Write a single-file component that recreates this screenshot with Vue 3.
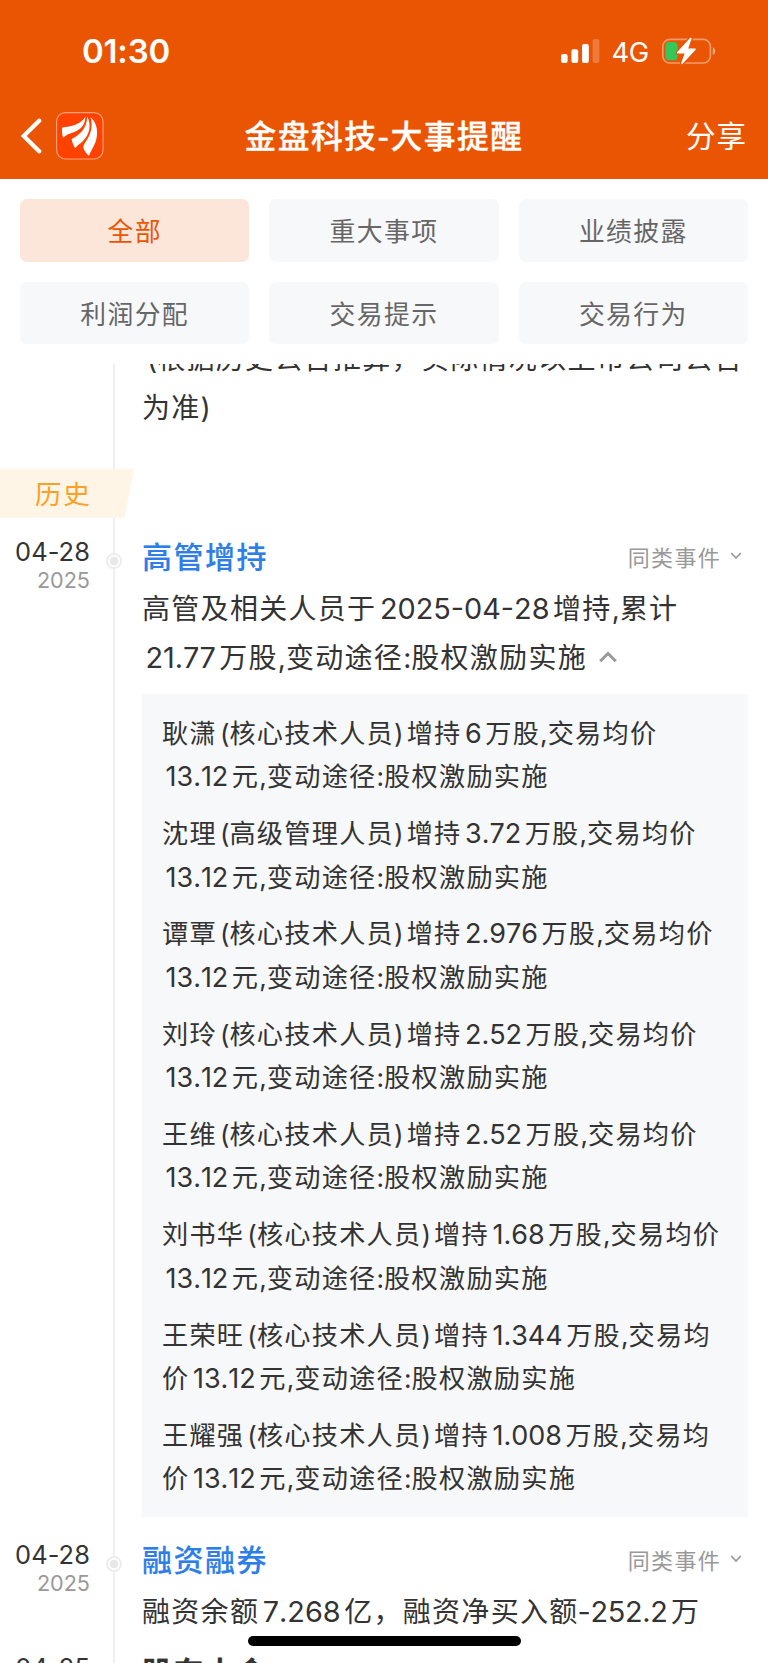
<script setup>
import { ref } from 'vue'

const activeFilter = ref('全部')
const filters = ['全部', '重大事项', '业绩披露', '利润分配', '交易提示', '交易行为']

const noticeLines = ['(根据历史公告推算，实际情况以上市公司公告', '为准)']

// Each event is one node of the timeline
const events = ref([
  {
    day: '04-28',
    year: '2025',
    title: '高管增持',
    link: true,
    open: true,
    lines: ['高管及相关人员于2025-04-28增持,累计', '21.77万股,变动途径:股权激励实施'],
    details: [
      ['耿潇(核心技术人员)增持6万股,交易均价', '13.12元,变动途径:股权激励实施'],
      ['沈理(高级管理人员)增持3.72万股,交易均价', '13.12元,变动途径:股权激励实施'],
      ['谭覃(核心技术人员)增持2.976万股,交易均价', '13.12元,变动途径:股权激励实施'],
      ['刘玲(核心技术人员)增持2.52万股,交易均价', '13.12元,变动途径:股权激励实施'],
      ['王维(核心技术人员)增持2.52万股,交易均价', '13.12元,变动途径:股权激励实施'],
      ['刘书华(核心技术人员)增持1.68万股,交易均价', '13.12元,变动途径:股权激励实施'],
      ['王荣旺(核心技术人员)增持1.344万股,交易均', '价13.12元,变动途径:股权激励实施'],
      ['王耀强(核心技术人员)增持1.008万股,交易均', '价13.12元,变动途径:股权激励实施']
    ]
  },
  {
    day: '04-28',
    year: '2025',
    title: '融资融券',
    link: true,
    lines: ['融资余额7.268亿，融资净买入额-252.2万']
  },
  {
    day: '04-25',
    year: '2025',
    title: '股东大会',
    link: false,
    lines: []
  }
])

// Split a line so numbers and brackets get their own spacing
function split(line) {
  return line.split(/(-?\d[\d.-]*|[(),:])/).filter(Boolean).map(text => {
    let type = 'han'
    if (/\d/.test(text)) type = text[0] === '-' ? 'num minus' : 'num'
    else if (text === '(') type = 'mark open'
    else if (text === ')') type = 'mark close'
    else if (/[,:]/.test(text)) type = 'mark'
    return { text, type }
  })
}
</script>

<template>
  <div class="page">
    <header class="header">
      <div class="status">
        <span class="clock">01:30</span>
        <div class="status-right">
          <svg class="signal" width="39" height="25" viewBox="0 0 39 25">
            <rect x="0" y="15" width="6.6" height="9" rx="2" fill="#fff" />
            <rect x="10.4" y="10.3" width="6.8" height="13.7" rx="2" fill="#fff" />
            <rect x="21" y="5" width="6.8" height="19" rx="2" fill="#fff" />
            <rect x="31.6" y="0" width="6.8" height="24" rx="2" fill="#fff" opacity=".22" />
          </svg>
          <span class="network">4G</span>
          <svg class="battery" width="56" height="28" viewBox="0 0 56 28">
            <rect x="1.8" y="2.4" width="47.6" height="23.6" rx="7" fill="none" stroke="#fff" stroke-opacity=".42" stroke-width="1.6" />
            <path d="M51.8 10.2c3.2 1.4 3.2 6.6 0 8z" fill="#fff" opacity=".5" />
            <rect x="4.4" y="5" width="12.2" height="18.2" rx="4" fill="#34c759" />
            <path d="M28.8 1.2L16.2 15.1c-.6.7-.3 1.4.6 1.4h6.8l-3.3 9.3c-.4 1.3.7 1.8 1.6.8L34.4 12.9c.6-.7.3-1.4-.6-1.4h-6.6l3.3-9.4c.4-1.3-.8-1.9-1.7-.9z" fill="#fff" stroke="#ea5504" stroke-width="2.6" paint-order="stroke" />
          </svg>
        </div>
      </div>
      <nav class="nav">
        <div class="nav-left">
          <svg width="22" height="36" viewBox="0 0 22 36">
            <path d="M18.2 2.8L2.8 18l15.4 15.2" fill="none" stroke="#fff" stroke-width="4.2" stroke-linecap="round" />
          </svg>
          <svg class="logo" width="48" height="48" viewBox="0 0 48 48">
            <rect x=".6" y=".6" width="46.4" height="46.4" rx="9" fill="#ff4200" stroke="#ffa27c" stroke-width="1.1" />
            <g fill="#fff">
              <path d="M6.2 15.4C15 14.6 25 12.5 29.3 4.8c.2 8.7-5.5 13.5-12.3 15.7-4 1.3-7.2 2.5-9.8 5.3-1.2-3.3-1.5-6.8-1-10.4z" />
              <path d="M31.2 4.5C30.8 17.5 23 23 15.6 27c.6 3.3 1.7 6.2 3.6 9.2 2.3-3 5.4-4.7 8-7.4C33.5 22.2 35.8 13.5 31.2 4.5z" />
              <path d="M34.6 5.2c2.7 9.3-.2 17.8-4.6 24-1.3 2-2.5 4-2.8 6.3 1 3.3 3 5.9 5.7 8.2 2-4.7 5-9 6.8-14.2C42.3 21.5 41.8 11.5 34.6 5.2z" />
            </g>
          </svg>
        </div>
        <h1 class="nav-title">金盘科技-大事提醒</h1>
        <span class="share">分享</span>
      </nav>
    </header>

    <section class="filters">
      <button
        v-for="name in filters"
        :key="name"
        class="filter"
        :class="{ active: name === activeFilter }"
        @click="activeFilter = name"
      >{{ name }}</button>
    </section>

    <main class="timeline">
      <div class="notice">
        <p v-for="line in noticeLines" :key="line" class="line">
          <span v-for="(part, i) in split(line)" :key="i" :class="part.type">{{ part.text }}</span>
        </p>
      </div>

      <div class="ribbon">历史</div>

      <article v-for="(event, index) in events" :key="index" class="event">
        <div class="date">
          <span class="day">{{ event.day }}</span>
          <span class="year">{{ event.year }}</span>
          <i class="dot"></i>
        </div>
        <div class="content">
          <div class="event-head">
            <h2 class="event-title" :class="{ plain: !event.link }">{{ event.title }}</h2>
            <span v-if="event.link" class="similar">
              同类事件
              <svg width="12" height="9" viewBox="0 0 12 9">
                <path d="M1.2 2L6 7l4.8-5" fill="none" stroke="#999" stroke-width="1.8" />
              </svg>
            </span>
          </div>
          <p v-for="(line, n) in event.lines" :key="n" class="line">
            <span v-for="(part, i) in split(line)" :key="i" :class="part.type">{{ part.text }}</span>
            <svg
              v-if="event.open && n === event.lines.length - 1"
              class="toggle"
              width="18"
              height="12"
              viewBox="0 0 18 12"
            >
              <path d="M1.2 10.3L9 2.5l7.8 7.8" fill="none" stroke="#999" stroke-width="3" />
            </svg>
          </p>
          <ul v-if="event.details" class="details">
            <li v-for="(item, d) in event.details" :key="d">
              <p v-for="line in item" :key="line" class="line">
                <span v-for="(part, i) in split(line)" :key="i" :class="part.type">{{ part.text }}</span>
              </p>
            </li>
          </ul>
        </div>
      </article>
    </main>

    <div class="home-bar"></div>
  </div>
</template>

<style>
body {
  margin: 0;
  background: #fff;
}
</style>

<style scoped>
.page {
  position: relative;
  display: flex;
  flex-direction: column;
  width: 768px;
  height: 1663px;
  overflow: hidden;
  background: #fff;
  color: #333;
  font-family: "Noto Sans CJK SC", sans-serif;
}

p, h1, h2, ul {
  margin: 0;
  padding: 0;
}

/* Header */
.header {
  flex: none;
  height: 179.3px;
  background: #ea5504;
  color: #fff;
}

.status {
  display: flex;
  justify-content: space-between;
  align-items: center;
  height: 102px;
  padding: 0 51px 0 82px;
}

.clock {
  font: 600 33px/40px Inter, sans-serif;
  letter-spacing: -0.2px;
}

.status-right {
  display: flex;
  align-items: center;
}

.network {
  margin: 2px 12px 0 11px;
  font: 400 27.4px/32px Inter, sans-serif;
  letter-spacing: -0.3px;
}

.nav {
  display: grid;
  grid-template-columns: 1fr auto 1fr;
  align-items: center;
  height: 68px;
  padding: 0 21px;
}

.nav-left {
  display: flex;
  align-items: center;
  gap: 13px;
}

.nav-title {
  margin-top: -5px;
  font-size: 31.8px;
  font-weight: 500;
  line-height: 40px;
  letter-spacing: 1.5px;
  -webkit-text-stroke: 0.3px #fff;
}

.share {
  justify-self: end;
  margin-top: -5px;
  font-size: 29.5px;
  line-height: 40px;
  letter-spacing: 1px;
}

/* Filters */
.filters {
  flex: none;
  display: grid;
  grid-template-columns: repeat(3, 1fr);
  grid-auto-rows: 62.7px;
  gap: 20px;
  padding: 19.7px 20px 19.5px;
}

.filter {
  padding: 0 0 2px;
  border: none;
  border-radius: 7px;
  background: #f7f8fa;
  color: #666;
  font-family: inherit;
  font-size: 25.8px;
  letter-spacing: 1.4px;
  cursor: pointer;
}

.filter.active {
  background: #fce6da;
  color: #ea5504;
}

/* Timeline */
.timeline {
  flex: 1;
  min-height: 0;
  overflow: hidden;
  background: linear-gradient(#efefef, #efefef) 113px 0 / 2px 100% no-repeat;
}

.notice {
  margin-top: -30px;
  padding-left: 142px;
}

.line {
  height: 49px;
  font-size: 28px;
  line-height: 46px;
  letter-spacing: 1.3px;
  white-space: nowrap;
}

.num,
.mark {
  font-family: Inter, "Noto Sans CJK SC", sans-serif;
  line-height: 1;
  letter-spacing: 0;
}

.num {
  margin: 0 3.5px;
  font-size: 1.03em;
  font-kerning: none;
}

.minus {
  margin-left: -1px;
  letter-spacing: -0.3px;
}

.open {
  margin-left: 3px;
}

.close {
  margin-right: 3px;
}

.notice .open {
  margin-left: 5px;
}

.toggle {
  margin-left: 11.5px;
  vertical-align: 5px;
}

.ribbon {
  box-sizing: border-box;
  width: 134px;
  height: 49px;
  margin: 37px 0 15px;
  padding-left: 35px;
  background: #fef5e7;
  clip-path: polygon(0 0, 100% 0, 93% 100%, 0 100%);
  color: #ff9f24;
  font-size: 26.5px;
  line-height: 47px;
  letter-spacing: 1.8px;
}

.event {
  display: grid;
  grid-template-columns: 142px 606px;
  margin-bottom: 12.5px;
}

.date {
  position: relative;
  display: flex;
  flex-direction: column;
  align-items: flex-end;
  padding: 4.5px 52px 0 0;
  font-family: Inter, sans-serif;
}

.day {
  font-size: 25.4px;
  line-height: 30px;
  letter-spacing: 0.1px;
}

.year {
  color: #999;
  font-size: 21.6px;
  line-height: 26px;
}

.dot {
  position: absolute;
  top: 20px;
  left: 106px;
  box-sizing: border-box;
  width: 16px;
  height: 16px;
  border: 2px solid #ededed;
  border-radius: 50%;
  background: radial-gradient(circle, #e8e8e8 4px, #fff 4.7px);
}

.event-head {
  display: flex;
  justify-content: space-between;
  align-items: center;
  height: 49px;
  margin-bottom: 2px;
}

.event-title {
  margin-top: -5px;
  color: #2d7ee8;
  font-size: 30px;
  font-weight: 500;
  line-height: 46px;
  letter-spacing: 1.5px;
  -webkit-text-stroke: 0.15px;
}

.event-title.plain {
  color: #333;
  font-weight: 700;
}

.similar {
  display: flex;
  align-items: center;
  gap: 9px;
  margin-top: -3px;
  padding-right: 6px;
  color: #999;
  font-size: 22px;
  letter-spacing: 1.3px;
}

.details {
  display: flex;
  flex-direction: column;
  gap: 13.5px;
  margin: 12px 0 6.5px;
  padding: 17px 20px;
  background: #f7f8fa;
  list-style: none;
}

.details .line {
  height: 43.4px;
  font-size: 26.2px;
  line-height: 43.6px;
  letter-spacing: 1.25px;
}

.details .num,
.details .mark {
  line-height: 1;
  letter-spacing: 0;
}

.home-bar {
  position: absolute;
  bottom: 17px;
  left: 247.5px;
  width: 273.5px;
  height: 10px;
  border-radius: 5px;
  background: #000;
}
</style>
